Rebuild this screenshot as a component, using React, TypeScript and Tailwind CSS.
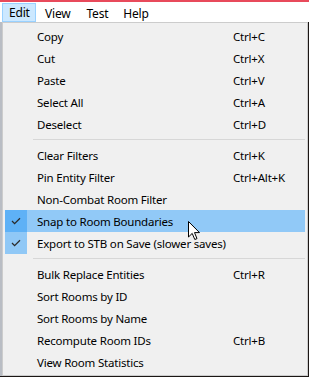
import React from "react"

type Item = { label: string; shortcut?: string; checked?: boolean; hot?: boolean }

const groups: Item[][] = [
  [
    { label: "Copy", shortcut: "Ctrl+C" },
    { label: "Cut", shortcut: "Ctrl+X" },
    { label: "Paste", shortcut: "Ctrl+V" },
    { label: "Select All", shortcut: "Ctrl+A" },
    { label: "Deselect", shortcut: "Ctrl+D" },
  ],
  [
    { label: "Clear Filters", shortcut: "Ctrl+K" },
    { label: "Pin Entity Filter", shortcut: "Ctrl+Alt+K" },
    { label: "Non-Combat Room Filter" },
    { label: "Snap to Room Boundaries", checked: true, hot: true },
    { label: "Export to STB on Save (slower saves)", checked: true },
  ],
  [
    { label: "Bulk Replace Entities", shortcut: "Ctrl+R" },
    { label: "Sort Rooms by ID" },
    { label: "Sort Rooms by Name" },
    { label: "Recompute Room IDs", shortcut: "Ctrl+B" },
    { label: "View Room Statistics" },
  ],
]

function Check() {
  return (
    <svg width="10" height="8" viewBox="0 0 10 8" className="block">
      <path d="M1 4 L3.6 6.6 L9 1.2" fill="none" stroke="#2b2b2b" strokeWidth="1.3" />
    </svg>
  )
}

function MenuRow({ item }: { item: Item }) {
  return (
    <div className={`flex h-[22px] items-center ${item.hot ? "bg-[#91c9f7]" : ""}`}>
      <div
        className={`flex h-[22px] w-[22px] shrink-0 items-center justify-center ${
          item.checked ? (item.hot ? "bg-[#5eb1f6]" : "bg-[#90c8f6]") : ""
        }`}
      >
        {item.checked && <Check />}
      </div>
      <span className="ml-[10px] w-[196px] whitespace-nowrap pt-[2px]">{item.label}</span>
      <span className="whitespace-nowrap pt-[2px]">{item.shortcut}</span>
    </div>
  )
}

export default function App() {
  return (
    <div
      className="relative flex h-[377px] w-[309px] flex-col overflow-hidden bg-[#1b1614] text-[11.5px] tracking-[-0.2px] text-black"
      style={{ fontFamily: '"Segoe UI", "Noto Sans", sans-serif' }}
    >
      {/* title strip */}
      <div className="h-[2px] bg-[#e84a5b]" />

      {/* menu bar */}
      <div className="flex h-[20px] items-start bg-white text-[12px]">
        <div className="ml-[2px] mt-[1px] flex h-[19px] w-[34px] items-center border border-[#99d1ff] bg-[#cce8ff] pl-[6px]">
          Edit
        </div>
        <span className="ml-[9px] mt-[3px]">View</span>
        <span className="ml-[16px] mt-[3px]">Test</span>
        <span className="ml-[15px] mt-[3px]">Help</span>
      </div>

      <div className="flex">
        <div className="w-[2px] bg-[#b9bdc4]" />
        {/* dropdown */}
        <div className="flex h-[354px] w-[306px] flex-col border border-[#cccccc] bg-[#f0f0f0] pb-[2px] pl-[2px] pr-[2px] pt-[2px]">
          {groups.map((g, gi) => (
            <div key={gi}>
              {gi > 0 && (
                <div className="flex h-[9px] items-center pl-[28px]">
                  <div className="h-px w-full bg-[#d7d7d7]" />
                </div>
              )}
              {g.map((it) => (
                <MenuRow key={it.label} item={it} />
              ))}
            </div>
          ))}
        </div>
        <div className="w-[1px] bg-[#1b1614]" />
      </div>

      {/* mouse cursor */}
      <svg className="absolute left-[188px] top-[221px]" width="13" height="20" viewBox="0 0 13 20">
        <path
          d="M0.5 0.5 L0.5 16 L4.2 12.4 L6.8 18.5 L9 17.6 L6.5 11.6 L11.5 11.6 Z"
          fill="white"
          stroke="black"
          strokeWidth="1"
          strokeLinejoin="miter"
        />
      </svg>
    </div>
  )
}
